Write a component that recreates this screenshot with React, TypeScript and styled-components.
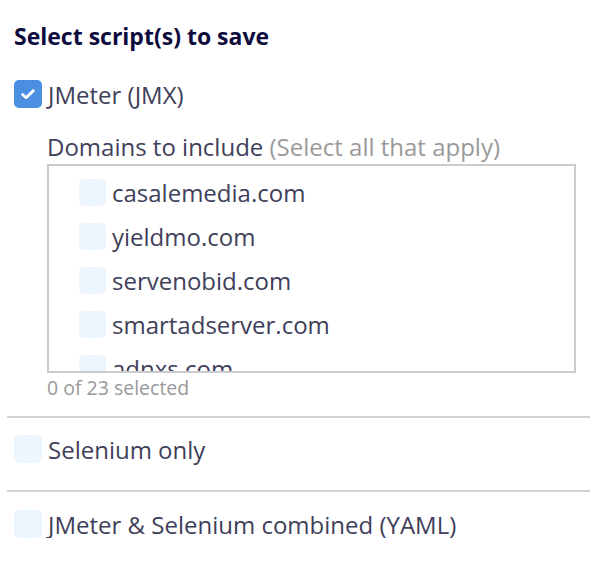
import React from "react";
import styled, { createGlobalStyle } from "styled-components";

const Global = createGlobalStyle`
  body { margin: 0; background: #fff; font-family: "Open Sans", "Noto Sans", sans-serif; }
`;

const Page = styled.div`
  width: 583px;
  padding: 22px 2px 0 7px;
`;

const Title = styled.h2`
  margin: 0 0 30px 7px;
  font-size: 23px;
  line-height: 28px;
  font-weight: 700;
  color: #0d0c3d;
`;

const Option = styled.label`
  display: flex;
  align-items: center;
  gap: 6px;
  padding-left: 7px;
  height: 28px;
  font-size: 24px;
  color: #40405a;
  white-space: nowrap;
`;

const Box = styled.span<{ $checked?: boolean; $size?: number }>`
  flex: none;
  width: ${(p) => p.$size ?? 28}px;
  height: ${(p) => p.$size ?? 28}px;
  border-radius: 5px;
  background: ${(p) => (p.$checked ? "#4a8fe0" : "#edf5ff")};
  display: flex;
  align-items: center;
  justify-content: center;
`;

const Nested = styled.div`
  padding-left: 40px;
  margin-top: 25px;
`;

const FieldLabel = styled.div`
  font-size: 24px;
  line-height: 28px;
  color: #40405a;
  white-space: nowrap;
`;

const Hint = styled.span`
  color: #9a9a9a;
`;

const ListBox = styled.div`
  margin-top: 3px;
  width: 525px;
  height: 201px;
  border: 2px solid #cbcbcb;
  overflow: hidden;
  padding-top: 4px;
  box-sizing: content-box;
`;

const Item = styled.div`
  display: flex;
  align-items: center;
  gap: 6px;
  height: 44px;
  padding-left: 30px;
  font-size: 24px;
  color: #40405a;
  white-space: nowrap;
`;

const Count = styled.div`
  font-size: 19.5px;
  line-height: 24px;
  margin-top: 3px;
  color: #999;
`;

const Divider = styled.hr<{ $top: number }>`
  margin: ${(p) => p.$top}px 0 0 0;
  border: none;
  height: 2px;
  background: #d2d2d2;
`;

const Spaced = styled.div<{ $top: number }>`
  margin-top: ${(p) => p.$top}px;
`;

const Check = () => (
  <svg width="18" height="18" viewBox="0 0 16 16">
    <path d="M3.2 8.4l3.1 3L12.8 5" fill="none" stroke="#fff" strokeWidth="2.5" strokeLinecap="round" strokeLinejoin="round" />
  </svg>
);

const domains = ["casalemedia.com", "yieldmo.com", "servenobid.com", "smartadserver.com", "adnxs.com", "doubleclick.net"];

export default function App() {
  return (
    <>
      <Global />
      <Page>
        <Title>Select script(s) to save</Title>
        <Option>
          <Box $checked>
            <Check />
          </Box>
          JMeter (JMX)
        </Option>
        <Nested>
          <FieldLabel>
            Domains to include <Hint>(Select all that apply)</Hint>
          </FieldLabel>
          <ListBox>
            {domains.map((d) => (
              <Item key={d}>
                <Box $size={27} />
                {d}
              </Item>
            ))}
          </ListBox>
          <Count>0 of 23 selected</Count>
        </Nested>
        <Divider $top={16} />
        <Spaced $top={17}>
          <Option>
            <Box />
            Selenium only
          </Option>
        </Spaced>
        <Divider $top={27} />
        <Spaced $top={18}>
          <Option>
            <Box />
            JMeter &amp; Selenium combined (YAML)
          </Option>
        </Spaced>
      </Page>
    </>
  );
}
